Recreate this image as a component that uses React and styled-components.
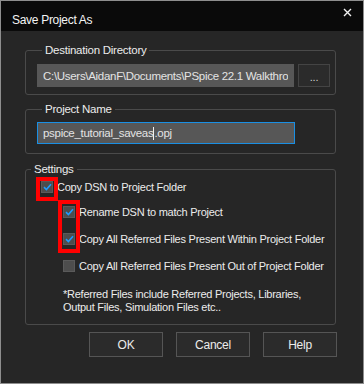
import React from "react";
import styled, { createGlobalStyle } from "styled-components";

const GlobalStyle = createGlobalStyle`
  html, body {
    margin: 0;
    padding: 0;
    background: #262626;
  }
  body {
    font-family: "Liberation Sans", Arial, sans-serif;
  }
`;

const Window = styled.div`
  position: relative;
  width: 364px;
  height: 384px;
  box-sizing: border-box;
  border: 1px solid #8e8e8e;
  background: #262626;
  display: flex;
  flex-direction: column;
  color: #ececec;
  font-size: 11px;
  letter-spacing: -0.25px;
`;

const TitleBar = styled.div`
  height: 30px;
  flex: none;
  background: #0a0a0a;
  display: flex;
  justify-content: space-between;
  align-items: flex-start;
  padding: 0 10px 0 11px;
`;

const Title = styled.div`
  padding-top: 12px;
  font-size: 12px;
  letter-spacing: -0.3px;
  color: #f4f4f4;
`;

const Close = styled.div`
  padding-top: 6px;
  width: 10px;
  height: 10px;
`;

const Body = styled.div`
  flex: 1;
  padding: 13px 27px 0 24px;
  display: flex;
  flex-direction: column;
`;

const Group = styled.fieldset`
  margin: ${(p) => p.$mt || 0}px 0 0 0;
  border: 1px solid #4a4a4a;
  border-radius: 3px;
  padding: ${(p) => p.$pad};
  min-width: 0;
`;

const Legend = styled.legend`
  margin-left: 5px;
  padding: 0 3px;
  line-height: 13px;
  font-size: 11.5px;
  color: #ececec;
`;

const Row = styled.div`
  display: flex;
  gap: 4px;
`;

const TextBox = styled.div`
  flex: 1;
  min-width: 0;
  height: ${(p) => p.$h}px;
  box-sizing: border-box;
  background: #575757;
  border: 1px solid ${(p) => (p.$focus ? "#1a8fe3" : "#575757")};
  color: #e4e4e4;
  padding: 0 5px;
  display: flex;
  align-items: center;
  white-space: nowrap;
  overflow: hidden;
  font-size: 11.5px;
  letter-spacing: -0.3px;
`;

const Clip = styled.span`
  display: block;
  max-width: 100%;
  overflow: hidden;
  white-space: nowrap;
  text-overflow: clip;
`;

const Caret = styled.span`
  display: inline-block;
  width: 1px;
  height: 13px;
  background: #f0f0f0;
`;

const BrowseButton = styled.div`
  width: 32px;
  height: 23px;
  flex: none;
  box-sizing: border-box;
  background: #2b2b2b;
  border: 1px solid #444;
  color: #cfcfcf;
  display: flex;
  align-items: center;
  justify-content: center;
  font-size: 11px;
  padding-top: 2px;
`;

const CheckRow = styled.div`
  display: flex;
  align-items: center;
  gap: 4px;
  height: 14px;
  white-space: nowrap;
  padding-left: ${(p) => p.$indent}px;
  margin-bottom: ${(p) => p.$mb}px;
`;

const Box = styled.span`
  width: 12px;
  height: 12px;
  box-sizing: border-box;
  background: #4d4d4d;
  border: 1px solid #5a5a5a;
  display: flex;
  align-items: center;
  justify-content: center;
  flex: none;
`;

const Note = styled.div`
  padding-left: 37px;
  margin-top: 15px;
  line-height: 13px;
`;

const ButtonRow = styled.div`
  display: flex;
  justify-content: flex-end;
  gap: 13px;
  margin: 7px -1px 0 0;
`;

const Button = styled.div`
  width: 74px;
  height: 25px;
  box-sizing: border-box;
  background: #2b2b2b;
  border: 1px solid #555;
  display: flex;
  align-items: center;
  justify-content: center;
  font-size: 12px;
  color: #ececec;
`;

const Marker = styled.div`
  position: absolute;
  box-sizing: border-box;
  border: 4px solid #ff0000;
  left: ${(p) => p.$x}px;
  top: ${(p) => p.$y}px;
  width: ${(p) => p.$w}px;
  height: ${(p) => p.$h}px;
  pointer-events: none;
`;

const Check = ({ checked }) => (
  <Box>
    {checked && (
      <svg width="9" height="8" viewBox="0 0 9 8">
        <path d="M1 4.2 L3.4 6.5 L8 1.3" fill="none" stroke="#1e9cff" strokeWidth="1.6" />
      </svg>
    )}
  </Box>
);

const Option = ({ checked, indent, mb, children }) => (
  <CheckRow $indent={indent} $mb={mb}>
    <Check checked={checked} />
    <span>{children}</span>
  </CheckRow>
);

export default function App() {
  return (
    <>
      <GlobalStyle />
      <Window>
        <TitleBar>
          <Title>Save Project As</Title>
          <Close>
            <svg width="9" height="9" viewBox="0 0 9 9">
              <path d="M1 1 L8 8 M8 1 L1 8" stroke="#f2f2f2" strokeWidth="1.4" />
            </svg>
          </Close>
        </TitleBar>
        <Body>
          <Group $pad="7px 5px 7px 11px">
            <Legend>Destination Directory</Legend>
            <Row>
              <TextBox $h={23}>
                <Clip>C:\Users\AidanF\Documents\PSpice 22.1 Walkthrough\Tutorial</Clip>
              </TextBox>
              <BrowseButton>...</BrowseButton>
            </Row>
          </Group>
          <Group $mt={8} $pad="6px 40px 9px 11px">
            <Legend>Project Name</Legend>
            <TextBox $h={22} $focus>
              pspice_tutorial_saveas<Caret />.opj
            </TextBox>
          </Group>
          <Group $mt={9} $pad="4px 5px 10px 0">
            <Legend>Settings</Legend>
            <Option checked indent={15} mb={11}>Copy DSN to Project Folder</Option>
            <Option checked indent={37} mb={13}>Rename DSN to match Project</Option>
            <Option checked indent={37} mb={13}>Copy All Referred Files Present Within Project Folder</Option>
            <Option indent={37} mb={0}>Copy All Referred Files Present Out of Project Folder</Option>
            <Note>
              *Referred Files include Referred Projects, Libraries,
              <br />
              Output Files, Simulation Files etc..
            </Note>
          </Group>
          <ButtonRow>
            <Button>OK</Button>
            <Button>Cancel</Button>
            <Button>Help</Button>
          </ButtonRow>
        </Body>
        <Marker $x={35} $y={176} $w={22} $h={24} />
        <Marker $x={57} $y={199} $w={22} $h={53} />
      </Window>
    </>
  );
}
